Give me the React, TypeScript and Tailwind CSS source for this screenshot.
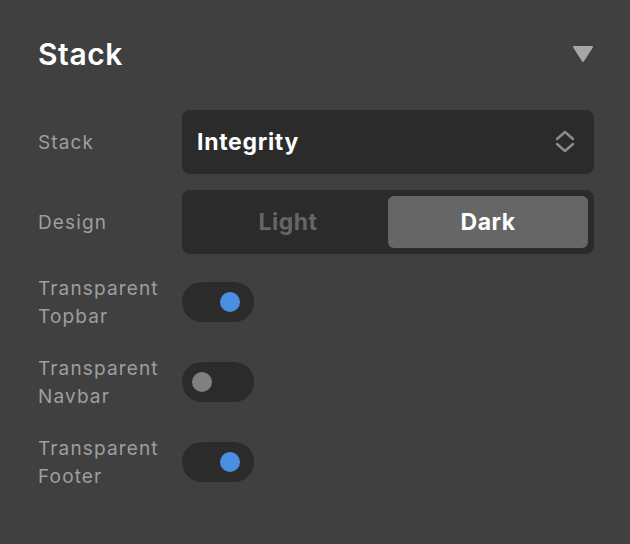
import { useState } from "react";

// --------
// --------

const font = { fontFamily: "Inter, 'Noto Sans', sans-serif" };

const Toggle = ({ on, onClick }: { on: boolean; onClick: () => void }) => {
  return (
    <button
      onClick={onClick}
      className="relative block w-[72px] h-10 rounded-full bg-[#2b2b2b]"
    >
      <span
        className={
          on
            ? "absolute top-[10px] right-[14px] w-5 h-5 rounded-full bg-[#4a90e2]"
            : "absolute top-[10px] left-[10px] w-5 h-5 rounded-full bg-[#808080]"
        }
      ></span>
    </button>
  );
};

const Row = ({ label, children }: { label: React.ReactNode; children: React.ReactNode }) => {
  return (
    <div className="flex items-center h-16">
      <div className="w-[144px] pt-[2px] text-[19px] leading-[28px] tracking-[0.06em] text-[#9e9e9e]">
        {label}
      </div>
      <div className="flex-1 flex items-center">{children}</div>
    </div>
  );
};

const App = () => {
  const [design, setDesign] = useState("Dark");
  const [toggles, setToggles] = useState({ topbar: true, navbar: false, footer: true });

  return (
    <div className="w-[630px] h-[544px] bg-[#404040] pl-[38px] pr-9 pt-[22px] overflow-hidden" style={font}>
      <div className="flex items-center justify-between h-16 mb-6">
        <h2 className="text-[30px] font-semibold text-white tracking-[0.02em]">Stack</h2>
        <svg width="22" height="18" viewBox="0 0 22 18">
          <path d="M2 2 L20 2 L11 16 Z" fill="#a6a6a6" stroke="#a6a6a6" strokeWidth="2" strokeLinejoin="round" />
        </svg>
      </div>

      <div className="flex flex-col gap-4">
        <Row label="Stack">
          <div className="flex-1 flex items-center justify-between h-16 rounded-lg bg-[#2b2b2b] pl-[15px] pr-[19px]">
            <span className="text-[23px] font-bold text-white tracking-[0.03em]">Integrity</span>
            <svg width="20" height="24" viewBox="0 0 20 24" fill="none">
              <path d="M2 9 L10 2 L18 9" stroke="#8c8c8c" strokeWidth="2.5" strokeLinecap="round" strokeLinejoin="round" />
              <path d="M2 14 L10 21 L18 14" stroke="#8c8c8c" strokeWidth="2.5" strokeLinecap="round" strokeLinejoin="round" />
            </svg>
          </div>
        </Row>

        <Row label="Design">
          <div className="flex-1 flex h-16 rounded-lg bg-[#2b2b2b] p-[6px]">
            {["Light", "Dark"].map((d) => (
              <button
                key={d}
                onClick={() => setDesign(d)}
                className={
                  design === d
                    ? "flex-1 rounded-md bg-[#666666] text-white text-[23px] font-bold tracking-[0.02em]"
                    : "flex-1 rounded-md text-[#666666] text-[23px] font-bold tracking-[0.02em]"
                }
              >
                {d}
              </button>
            ))}
          </div>
        </Row>

        <Row label={<>Transparent<br />Topbar</>}>
          <Toggle on={toggles.topbar} onClick={() => setToggles({ ...toggles, topbar: !toggles.topbar })} />
        </Row>
        <Row label={<>Transparent<br />Navbar</>}>
          <Toggle on={toggles.navbar} onClick={() => setToggles({ ...toggles, navbar: !toggles.navbar })} />
        </Row>
        <Row label={<>Transparent<br />Footer</>}>
          <Toggle on={toggles.footer} onClick={() => setToggles({ ...toggles, footer: !toggles.footer })} />
        </Row>
      </div>
    </div>
  );
};

export default App;
